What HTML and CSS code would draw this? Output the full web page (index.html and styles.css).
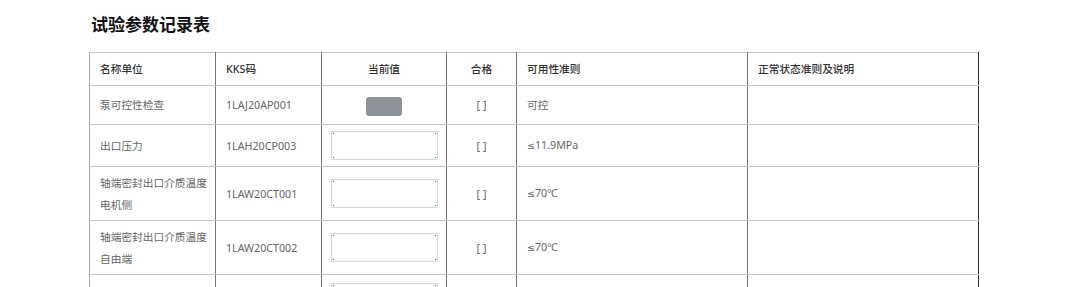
FILE: index.html
```html
<!DOCTYPE html>
<html lang="zh">
<head>
<meta charset="utf-8">
<title>试验参数记录表</title>
<link rel="stylesheet" href="styles.css">
</head>
<body>
<div class="page">
  <h1 class="title">试验参数记录表</h1>
  <table class="record">
    <colgroup>
      <col class="c1"><col class="c2"><col class="c3"><col class="c4"><col class="c5"><col class="c6">
    </colgroup>
    <thead>
      <tr class="head">
        <th>名称单位</th>
        <th>KKS码</th>
        <th class="center">当前值</th>
        <th class="center">合格</th>
        <th>可用性准则</th>
        <th>正常状态准则及说明</th>
      </tr>
    </thead>
    <tbody>
      <tr class="r1">
        <td>泵可控性检查</td>
        <td>1LAJ20AP001</td>
        <td class="center"><span class="btn"></span></td>
        <td class="center">[ ]</td>
        <td>可控</td>
        <td></td>
      </tr>
      <tr class="r2">
        <td>出口压力</td>
        <td>1LAH20CP003</td>
        <td><div class="box"></div></td>
        <td class="center">[ ]</td>
        <td><span class="le">≤</span>11.9MPa</td>
        <td></td>
      </tr>
      <tr class="r3">
        <td>轴端密封出口介质温度<br>电机侧</td>
        <td>1LAW20CT001</td>
        <td><div class="box"></div></td>
        <td class="center">[ ]</td>
        <td><span class="le">≤</span>70℃</td>
        <td></td>
      </tr>
      <tr class="r3">
        <td>轴端密封出口介质温度<br>自由端</td>
        <td>1LAW20CT002</td>
        <td><div class="box"></div></td>
        <td class="center">[ ]</td>
        <td><span class="le">≤</span>70℃</td>
        <td></td>
      </tr>
      <tr class="r5">
        <td></td>
        <td></td>
        <td><div class="box"></div></td>
        <td class="center"></td>
        <td></td>
        <td></td>
      </tr>
    </tbody>
  </table>
</div>
</body>
</html>
```
FILE: styles.css
```css
html, body {
  margin: 0;
  padding: 0;
  background: #ffffff;
  overflow: hidden;
}
body {
  font-family: "Noto Sans", "Noto Sans CJK SC", sans-serif;
  color: #666666;
}
.page {
  padding: 12px 0 0 89px;
}
.title {
  margin: 0 0 0 2px;
  font-family: "Noto Sans CJK SC", sans-serif;
  font-size: 17px;
  line-height: 24px;
  font-weight: 700;
  color: #111111;
  height: 40px;
}
.record {
  border-collapse: collapse;
  table-layout: fixed;
  width: 889px;
  font-size: 10.7px;
}
.c1 { width: 126px; }
.c2 { width: 106px; }
.c3 { width: 125px; }
.c4 { width: 70px; }
.c5 { width: 231px; }
.c6 { width: 231px; }
.record th,
.record td {
  border-top: 1px solid #c6c6c6;
  border-bottom: 1px solid #c6c6c6;
  border-left: 1px solid #7d707d;
  border-right: 1px solid #7d707d;
  padding: 0 2px 0 10px;
  text-align: left;
  vertical-align: middle;
  line-height: 22px;
  white-space: nowrap;
}
.record th:first-child,
.record td:first-child {
  border-left-color: #a8a8a8;
}
.record th:last-child,
.record td:last-child {
  border-right-color: #2a2a2a;
}
.record th {
  font-weight: 500;
  color: #333333;
}
.record .center {
  text-align: center;
  padding: 0;
}
.le {
  font-family: "DejaVu Sans", sans-serif;
  font-size: 9.5px;
}
.head th { height: 32px; }
.r1 td { height: 38px; }
.r2 td { height: 41px; }
.r3 td { height: 53px; }
.r5 td { height: 44px; }
.btn {
  display: inline-block;
  width: 36px;
  height: 19px;
  border-radius: 3px;
  background: #8d929b;
  vertical-align: middle;
}
.box {
  width: 105px;
  height: 27px;
  margin-left: -1px;
  border: 1px solid #d6d9de;
  box-shadow: inset 0 0 0 1px #eef8f6;
  background:
    linear-gradient(#555, #555) left top / 2px 2px no-repeat,
    linear-gradient(#555, #555) right top / 2px 2px no-repeat,
    linear-gradient(#555, #555) left bottom / 2px 2px no-repeat,
    linear-gradient(#555, #555) right bottom / 2px 2px no-repeat,
    #ffffff;
}
```
